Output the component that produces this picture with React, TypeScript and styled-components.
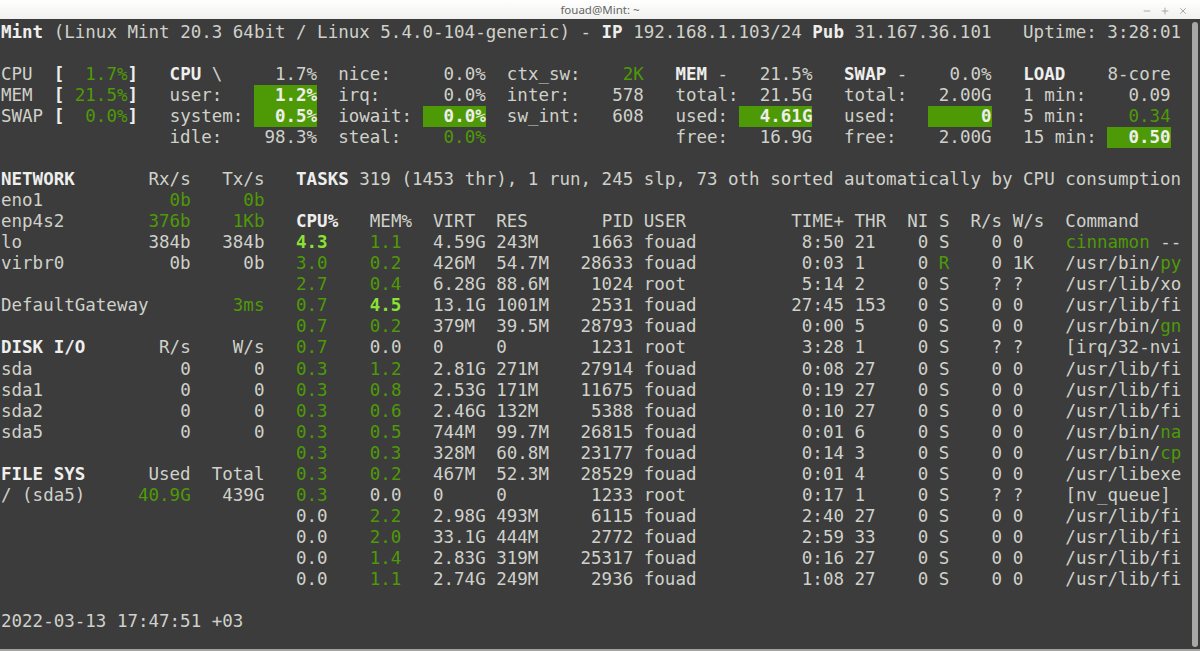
import React from 'react'
import styled, { createGlobalStyle } from 'styled-components'
import { Minus, Plus, X } from 'lucide-react'

type Tone = 'plain' | 'title' | 'ok' | 'careful' | 'bar'

interface Seg {
  col: number
  text: string
  tone: Tone
}

const toneColor: Record<Tone, string> = {
  plain: '#cfd1ca',
  title: '#eeeeec',
  ok: '#4e9a06',
  careful: '#8ae234',
  bar: '#eeeeec',
}

const GlobalStyle = createGlobalStyle`
  html,
  body {
    margin: 0;
    padding: 0;
    background: #3c3c3c;
  }
`

const Window = styled.div`
  display: flex;
  flex-direction: column;
  width: 1200px;
  height: 651px;
  overflow: hidden;
  background: #3c3c3c;
  box-sizing: border-box;
  border-bottom: 2px solid #a2a2a0;
`

const TitleBar = styled.header`
  flex: 0 0 20px;
  display: grid;
  grid-template-columns: 1fr auto 1fr;
  align-items: center;
  background: linear-gradient(#ffffff, #f1f1f0);
  border-bottom: 1px solid #3a3a3a;
  box-sizing: border-box;
`

const TitleText = styled.span`
  grid-column: 2;
  font-family: 'Noto Sans', sans-serif;
  font-size: 11.5px;
  line-height: 17px;
  color: #666666;
`

const WindowControls = styled.div`
  grid-column: 3;
  justify-self: end;
  display: flex;
  align-items: center;
  gap: 8px;
  padding: 3px 12px 0 0;
  color: #9a9a9a;
`

const Body = styled.div`
  flex: 1 1 auto;
  display: flex;
  min-height: 0;
`

const Terminal = styled.main`
  flex: 1 1 auto;
  padding: 1.5px 0 0 1px;
  font-family: 'DejaVu Sans Mono', monospace;
  font-size: 17.5px;
  line-height: 21.07px;
`

const Line = styled.div`
  height: 21.07px;
  white-space: pre;
  color: ${toneColor.plain};
`

const Text = styled.span<{ $tone: Tone }>`
  color: ${({ $tone }) => toneColor[$tone]};
  font-weight: ${({ $tone }) =>
    $tone === 'title' || $tone === 'careful' || $tone === 'bar'
      ? 700
      : 400};
  ${({ $tone }) =>
    $tone === 'bar' &&
    `
    display: inline-block;
    height: 21.07px;
    background: #4e9a06;
  `}
`

const ScrollTrack = styled.aside`
  flex: 0 0 11px;
  padding: 2px 2px 2px 3px;
  box-sizing: border-box;
`

const ScrollThumb = styled.div`
  height: 100%;
  background: #a8a8a6;
  border-radius: 3px;
`

const at = (col: number, text: string, tone: Tone = 'plain'): Seg => ({
  col,
  text,
  tone,
})

// right aligned, end is the column after the last character
const to = (end: number, text: string, tone: Tone = 'plain'): Seg =>
  at(end - text.length, text, tone)

const bar = (start: number, end: number, text: string): Seg =>
  at(start, text.padStart(end - start), 'bar')

const summary: Seg[][] = [
  [
    at(0, 'CPU'),
    at(5, '[', 'title'),
    at(6, '  1.7%', 'ok'),
    at(12, ']', 'title'),
    at(16, 'CPU', 'title'),
    at(20, '\\'),
    to(30, '1.7%'),
    at(32, 'nice:'),
    to(46, '0.0%'),
    at(48, 'ctx_sw:'),
    to(61, '2K', 'ok'),
    at(64, 'MEM', 'title'),
    at(68, '-'),
    to(77, '21.5%'),
    at(80, 'SWAP', 'title'),
    at(85, '-'),
    to(94, '0.0%'),
    at(97, 'LOAD', 'title'),
    to(111, '8-core'),
  ],
  [
    at(0, 'MEM'),
    at(5, '[', 'title'),
    at(6, ' 21.5%', 'ok'),
    at(12, ']', 'title'),
    at(16, 'user:'),
    bar(24, 30, '1.2%'),
    at(32, 'irq:'),
    to(46, '0.0%'),
    at(48, 'inter:'),
    to(61, '578'),
    at(64, 'total:'),
    to(77, '21.5G'),
    at(80, 'total:'),
    to(94, '2.00G'),
    at(97, '1 min:'),
    to(111, '0.09'),
  ],
  [
    at(0, 'SWAP'),
    at(5, '[', 'title'),
    at(6, '  0.0%', 'ok'),
    at(12, ']', 'title'),
    at(16, 'system:'),
    bar(24, 30, '0.5%'),
    at(32, 'iowait:'),
    bar(40, 46, '0.0%'),
    at(48, 'sw_int:'),
    to(61, '608'),
    at(64, 'used:'),
    bar(70, 77, '4.61G'),
    at(80, 'used:'),
    bar(88, 94, '0'),
    at(97, '5 min:'),
    to(111, '0.34', 'ok'),
  ],
  [
    at(16, 'idle:'),
    to(30, '98.3%'),
    at(32, 'steal:'),
    to(46, '0.0%', 'ok'),
    at(64, 'free:'),
    to(77, '16.9G'),
    at(80, 'free:'),
    to(94, '2.00G'),
    at(97, '15 min:'),
    bar(105, 111, '0.50'),
  ],
]

const side: Seg[][] = [
  [at(0, 'NETWORK', 'title'), to(18, 'Rx/s'), to(25, 'Tx/s')],
  [at(0, 'eno1'), to(18, '0b', 'ok'), to(25, '0b', 'ok')],
  [at(0, 'enp4s2'), to(18, '376b', 'ok'), to(25, '1Kb', 'ok')],
  [at(0, 'lo'), to(18, '384b'), to(25, '384b')],
  [at(0, 'virbr0'), to(18, '0b'), to(25, '0b')],
  [],
  [at(0, 'DefaultGateway'), to(25, '3ms', 'ok')],
  [],
  [at(0, 'DISK I/O', 'title'), to(18, 'R/s'), to(25, 'W/s')],
  [at(0, 'sda'), to(18, '0'), to(25, '0')],
  [at(0, 'sda1'), to(18, '0'), to(25, '0')],
  [at(0, 'sda2'), to(18, '0'), to(25, '0')],
  [at(0, 'sda5'), to(18, '0'), to(25, '0')],
  [],
  [at(0, 'FILE SYS', 'title'), to(18, 'Used'), to(25, 'Total')],
  [at(0, '/ (sda5)'), to(18, '40.9G', 'ok'), to(25, '439G')],
]

interface Proc {
  cpu: [string, Tone]
  mem: [string, Tone]
  virt: string
  res: string
  pid: string
  user: string
  time: string
  thr: string
  state?: Tone
  r?: string
  w?: string
  cmd: string
  exe?: string
  rest?: string
}

const fouad = 'fouad'
const firefox = '/usr/lib/fi'

const procs: Proc[] = [
  { cpu: ['4.3', 'careful'], mem: ['1.1', 'ok'], virt: '4.59G', res: '243M', pid: '1663', user: fouad, time: '8:50', thr: '21', cmd: '', exe: 'cinnamon', rest: ' --' },
  { cpu: ['3.0', 'ok'], mem: ['0.2', 'ok'], virt: '426M', res: '54.7M', pid: '28633', user: fouad, time: '0:03', thr: '1', state: 'ok', w: '1K', cmd: '/usr/bin/', exe: 'py' },
  { cpu: ['2.7', 'ok'], mem: ['0.4', 'ok'], virt: '6.28G', res: '88.6M', pid: '1024', user: 'root', time: '5:14', thr: '2', r: '?', w: '?', cmd: '/usr/lib/xo' },
  { cpu: ['0.7', 'ok'], mem: ['4.5', 'careful'], virt: '13.1G', res: '1001M', pid: '2531', user: fouad, time: '27:45', thr: '153', cmd: firefox },
  { cpu: ['0.7', 'ok'], mem: ['0.2', 'ok'], virt: '379M', res: '39.5M', pid: '28793', user: fouad, time: '0:00', thr: '5', cmd: '/usr/bin/', exe: 'gn' },
  { cpu: ['0.7', 'ok'], mem: ['0.0', 'plain'], virt: '0', res: '0', pid: '1231', user: 'root', time: '3:28', thr: '1', r: '?', w: '?', cmd: '[irq/32-nvi' },
  { cpu: ['0.3', 'ok'], mem: ['1.2', 'ok'], virt: '2.81G', res: '271M', pid: '27914', user: fouad, time: '0:08', thr: '27', cmd: firefox },
  { cpu: ['0.3', 'ok'], mem: ['0.8', 'ok'], virt: '2.53G', res: '171M', pid: '11675', user: fouad, time: '0:19', thr: '27', cmd: firefox },
  { cpu: ['0.3', 'ok'], mem: ['0.6', 'ok'], virt: '2.46G', res: '132M', pid: '5388', user: fouad, time: '0:10', thr: '27', cmd: firefox },
  { cpu: ['0.3', 'ok'], mem: ['0.5', 'ok'], virt: '744M', res: '99.7M', pid: '26815', user: fouad, time: '0:01', thr: '6', cmd: '/usr/bin/', exe: 'na' },
  { cpu: ['0.3', 'ok'], mem: ['0.3', 'ok'], virt: '328M', res: '60.8M', pid: '23177', user: fouad, time: '0:14', thr: '3', cmd: '/usr/bin/', exe: 'cp' },
  { cpu: ['0.3', 'ok'], mem: ['0.2', 'ok'], virt: '467M', res: '52.3M', pid: '28529', user: fouad, time: '0:01', thr: '4', cmd: '/usr/libexe' },
  { cpu: ['0.3', 'ok'], mem: ['0.0', 'plain'], virt: '0', res: '0', pid: '1233', user: 'root', time: '0:17', thr: '1', r: '?', w: '?', cmd: '[nv_queue]' },
  { cpu: ['0.0', 'plain'], mem: ['2.2', 'ok'], virt: '2.98G', res: '493M', pid: '6115', user: fouad, time: '2:40', thr: '27', cmd: firefox },
  { cpu: ['0.0', 'plain'], mem: ['2.0', 'ok'], virt: '33.1G', res: '444M', pid: '2772', user: fouad, time: '2:59', thr: '33', cmd: firefox },
  { cpu: ['0.0', 'plain'], mem: ['1.4', 'ok'], virt: '2.83G', res: '319M', pid: '25317', user: fouad, time: '0:16', thr: '27', cmd: firefox },
  { cpu: ['0.0', 'plain'], mem: ['1.1', 'ok'], virt: '2.74G', res: '249M', pid: '2936', user: fouad, time: '1:08', thr: '27', cmd: firefox },
]

const procLine = (p: Proc): Seg[] => [
  at(28, p.cpu[0], p.cpu[1]),
  at(35, p.mem[0], p.mem[1]),
  at(41, p.virt),
  at(47, p.res),
  to(60, p.pid),
  at(61, p.user),
  to(80, p.time),
  at(81, p.thr),
  to(88, '0'),
  at(89, p.state === 'ok' ? 'R' : 'S', p.state ?? 'plain'),
  to(95, p.r ?? '0'),
  at(96, p.w ?? '0'),
  at(101, p.cmd),
  ...(p.exe ? [at(101 + p.cmd.length, p.exe, 'ok' as Tone)] : []),
  ...(p.rest ? [at(101 + p.cmd.length + (p.exe ?? '').length, p.rest)] : []),
]

const tableHeader: Seg[] = [
  at(28, 'CPU%', 'title'),
  at(35, 'MEM%'),
  at(41, 'VIRT'),
  at(47, 'RES'),
  to(60, 'PID'),
  at(61, 'USER'),
  to(80, 'TIME+'),
  at(81, 'THR'),
  to(88, 'NI'),
  at(89, 'S'),
  to(95, 'R/s'),
  at(96, 'W/s'),
  at(101, 'Command'),
]

const buildScreen = (): Seg[][] => {
  const rows: Seg[][] = Array.from({ length: 29 }, () => [])

  rows[0] = [
    at(0, 'Mint', 'title'),
    at(5, '(Linux Mint 20.3 64bit / Linux 5.4.0-104-generic) - '),
    at(57, 'IP', 'title'),
    at(60, '192.168.1.103/24'),
    at(77, 'Pub', 'title'),
    at(81, '31.167.36.101'),
    at(97, 'Uptime: 3:28:01'),
  ]
  summary.forEach((segs, i) => {
    rows[2 + i] = segs
  })
  side.forEach((segs, i) => {
    rows[7 + i] = [...segs]
  })
  rows[7].push(
    at(28, 'TASKS', 'title'),
    at(34, '319 (1453 thr), 1 run, 245 slp, 73 oth sorted automatically by CPU consumption'),
  )
  rows[9].push(...tableHeader)
  procs.forEach((p, i) => {
    rows[10 + i].push(...procLine(p))
  })
  rows[28] = [at(0, '2022-03-13 17:47:51 +03')]

  return rows
}

const ScreenLine = ({ segs }: { segs: Seg[] }) => {
  let cursor = 0

  return (
    <Line>
      {segs.map((seg, i) => {
        const gap = ' '.repeat(Math.max(seg.col - cursor, 0))
        cursor = seg.col + seg.text.length
        return (
          <React.Fragment key={i}>
            {gap}
            <Text $tone={seg.tone}>{seg.text}</Text>
          </React.Fragment>
        )
      })}
    </Line>
  )
}

const App = () => (
  <Window>
    <GlobalStyle />
    <TitleBar>
      <TitleText>fouad@Mint: ~</TitleText>
      <WindowControls>
        <Minus size={10} strokeWidth={2} />
        <Plus size={10} strokeWidth={2} />
        <X size={10} strokeWidth={2} />
      </WindowControls>
    </TitleBar>
    <Body>
      <Terminal>
        {buildScreen().map((segs, i) => (
          <ScreenLine key={i} segs={segs} />
        ))}
      </Terminal>
      <ScrollTrack>
        <ScrollThumb />
      </ScrollTrack>
    </Body>
  </Window>
)

export default App
